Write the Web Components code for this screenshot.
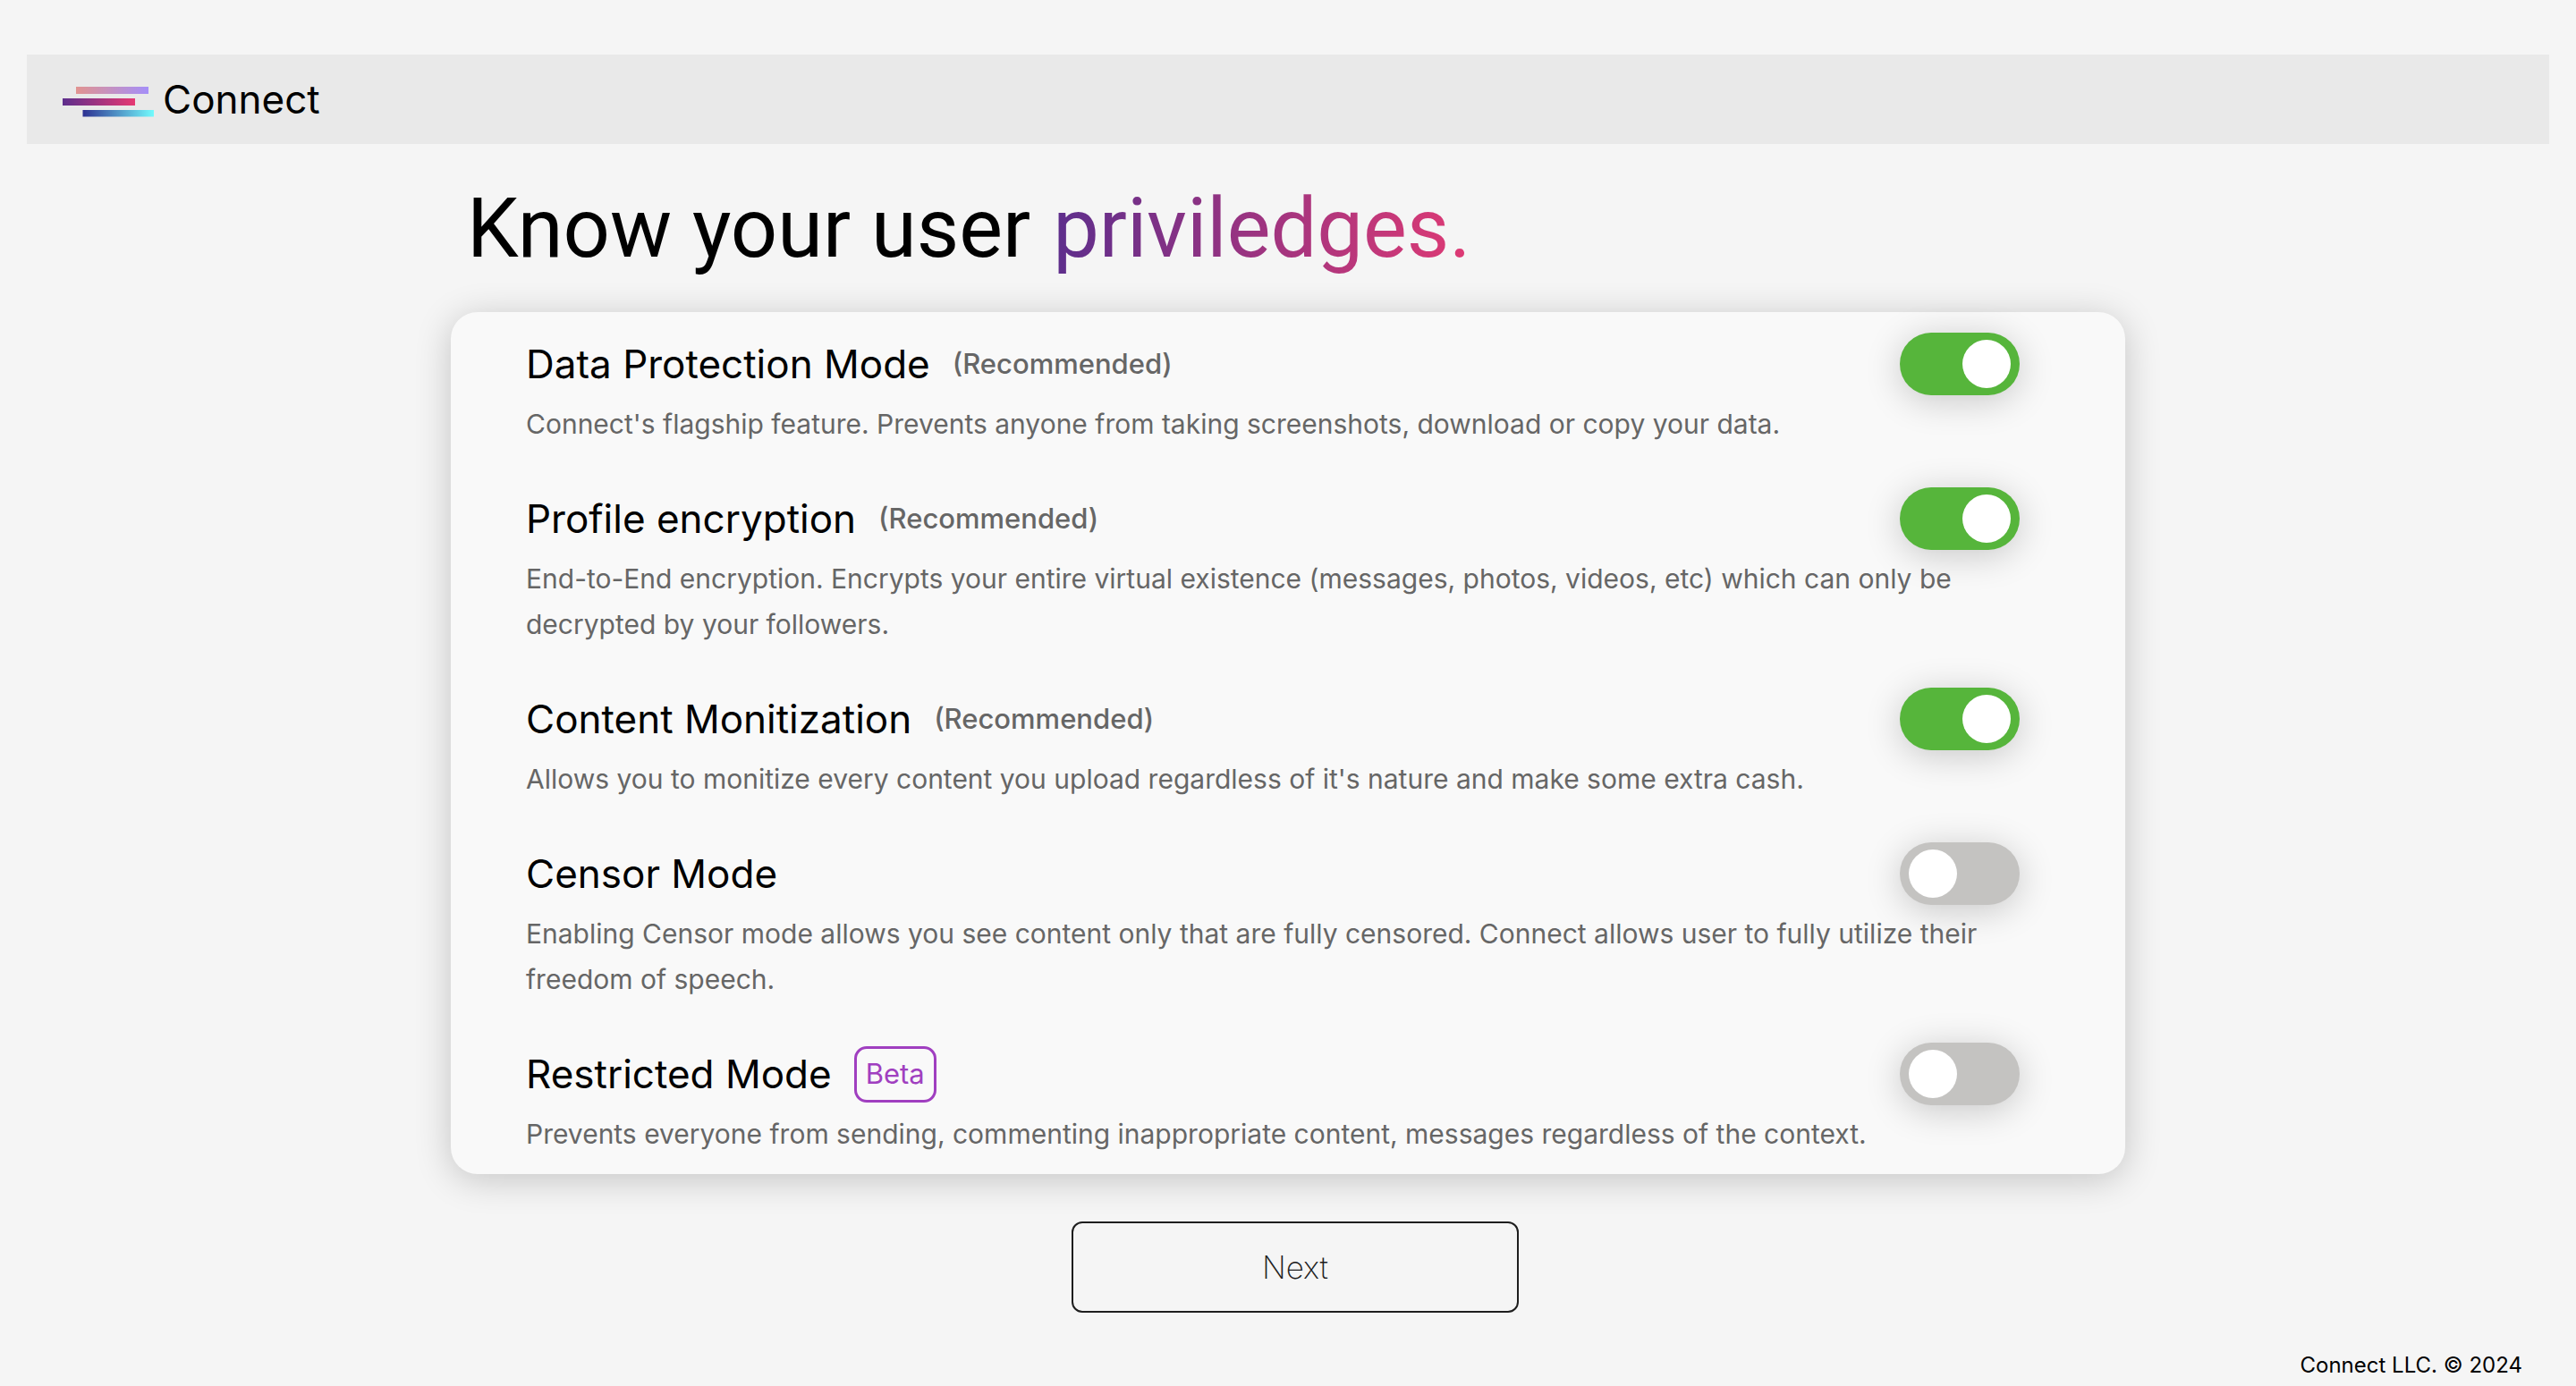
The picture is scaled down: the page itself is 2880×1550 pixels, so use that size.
<!DOCTYPE html>
<html lang="en">
<head>
<meta charset="utf-8">
<meta name="viewport" content="width=device-width, initial-scale=1">
<title>Connect</title>
<style>
  html { background: #f5f5f5; }
  body { margin: 0; color: #000; font-family: Inter, "Liberation Sans", sans-serif; }
</style>
</head>
<body>
<connect-page>
  <connect-header slot="header">Connect</connect-header>
  <page-heading>Know your user <span slot="accent">priviledges.</span></page-heading>
  <settings-card>
    <setting-row checked note="(Recommended)">Data Protection Mode
      <span slot="description">Connect's flagship feature. Prevents anyone from taking screenshots, download or copy your data.</span></setting-row>
    <setting-row checked note="(Recommended)">Profile encryption
      <span slot="description">End-to-End encryption. Encrypts your entire virtual existence (messages, photos, videos, etc) which can only be decrypted by your followers.</span></setting-row>
    <setting-row checked note="(Recommended)">Content Monitization
      <span slot="description">Allows you to monitize every content you upload regardless of it's nature and make some extra cash.</span></setting-row>
    <setting-row>Censor Mode
      <span slot="description">Enabling Censor mode allows you see content only that are fully censored. Connect allows user to fully utilize their freedom of speech.</span></setting-row>
    <setting-row badge="Beta">Restricted Mode
      <span slot="description">Prevents everyone from sending, commenting inappropriate content, messages regardless of the context.</span></setting-row>
  </settings-card>
  <next-button>Next</next-button>
  <page-footer slot="footer">Connect LLC. © 2024</page-footer>
</connect-page>

<script>
const define = (name, html, setup) => customElements.define(name, class extends HTMLElement {
  constructor() {
    super();
    const template = document.createElement('template');
    template.innerHTML = html;
    this.attachShadow({ mode: 'open' }).append(template.content.cloneNode(true));
  }
  connectedCallback() { if (setup) setup(this, this.shadowRoot); }
});

define('connect-page', `
  <style>
    :host { display: flex; flex-direction: column; box-sizing: border-box; min-height: 100vh; padding: 61px 30px 6px; }
    main { display: flex; flex-direction: column; width: 65vw; margin: 0 auto; }
    ::slotted([slot="footer"]) { margin-top: auto; }
  </style>
  <slot name="header"></slot>
  <main><slot></slot></main>
  <slot name="footer"></slot>`);

define('connect-header', `
  <style>
    :host { display: block; }
    header { display: flex; align-items: center; gap: 10px; height: 100px; padding: 0 40px; background: #e9e9e9; }
    svg { display: block; width: 102px; height: 42px; }
    a { color: inherit; text-decoration: none; font-size: 44px; line-height: 58px; }
  </style>
  <header>
    <svg viewBox="0 0 102 42" aria-hidden="true">
      <defs>
        <linearGradient id="a"><stop stop-color="#e19390"/><stop offset="1" stop-color="#a58ff8"/></linearGradient>
        <linearGradient id="b"><stop stop-color="#5d2e8c"/><stop offset="1" stop-color="#e63973"/></linearGradient>
        <linearGradient id="c"><stop stop-color="#2e3192"/><stop offset="1" stop-color="#72fbfd"/></linearGradient>
      </defs>
      <rect x="15" y="7" width="81" height="8" fill="url(#a)"/>
      <rect x="0" y="20" width="81" height="8" fill="url(#b)"/>
      <rect x="22.5" y="33" width="79.5" height="7.5" fill="url(#c)"/>
    </svg>
    <a href="#"><slot></slot></a>
  </header>`);

define('page-heading', `
  <style>
    :host { display: block; }
    h1 { display: flex; gap: 25px; margin: 35px 0 33px; padding: 0 18px; font-family: Roboto, Inter, sans-serif; font-size: 92px; line-height: 120px; font-weight: 400; white-space: nowrap; }
    .accent { background: linear-gradient(to right, #5d2e8c, #df3a74); -webkit-background-clip: text; background-clip: text; color: transparent; }
  </style>
  <h1><span><slot></slot></span><span class="accent"><slot name="accent"></slot></span></h1>`);

define('settings-card', `
  <style>
    :host { display: flex; flex-direction: column; gap: 45px; padding: 23px 84px 19px; border-radius: 30px; background: #f9f9f9; box-shadow: 0 6px 40px rgba(0, 0, 0, .2); }
  </style>
  <slot></slot>`);

define('setting-row', `
  <style>
    :host { display: block; }
    .head { display: flex; align-items: center; height: 70px; padding-right: 34px; }
    h2 { margin: 0; font-size: 44px; line-height: 58px; font-weight: 400; }
    .note { margin-left: 25px; font-size: 31px; line-height: 40px; font-weight: 500; color: #666; }
    .badge { margin-left: 25px; padding: 8px 10px 9px; border: 3px solid #a03fc0; border-radius: 14px; font-size: 31px; line-height: 40px; color: #a03fc0; }
    [hidden] { display: none; }
    input { appearance: none; display: flex; align-items: center; box-sizing: border-box; width: 134px; height: 70px; margin: 0 0 0 auto; padding: 0 10px; border-radius: 35px; background: #c4c3c1; box-shadow: 0 6px 40px rgba(0, 0, 0, .2); cursor: pointer; }
    input::before { content: ""; width: 54px; height: 54px; border-radius: 50%; background: #fff; }
    input:checked { justify-content: flex-end; background: #56b53b; }
    p { position: relative; margin: 7px 0 0; font-size: 30px; line-height: 51px; color: #666; }
  </style>
  <div class="head">
    <h2><label for="toggle"><slot></slot></label></h2>
    <span class="note" hidden></span>
    <span class="badge" hidden></span>
    <input id="toggle" type="checkbox" role="switch" aria-describedby="description">
  </div>
  <p id="description"><slot name="description"></slot></p>`,
  (host, root) => {
    root.querySelector('input').checked = host.hasAttribute('checked');
    for (const part of ['note', 'badge']) {
      const node = root.querySelector('.' + part);
      node.textContent = host.getAttribute(part) || '';
      node.hidden = !host.hasAttribute(part);
    }
  });

define('next-button', `
  <style>
    :host { display: flex; justify-content: center; padding: 53px 0 0 16px; }
    button { width: 500px; height: 102px; padding: 0; border: 2px solid #1e1e1e; border-radius: 12px; background: transparent; color: #1e1e1e; font: 200 35px/44px Inter, "Liberation Sans", sans-serif; cursor: pointer; }
  </style>
  <button type="button"><slot></slot></button>`);

define('page-footer', `
  <style>
    :host { display: block; }
    footer { padding-right: 30px; text-align: right; font-size: 24px; line-height: 34px; }
  </style>
  <footer><slot></slot></footer>`);
</script>
</body>
</html>
